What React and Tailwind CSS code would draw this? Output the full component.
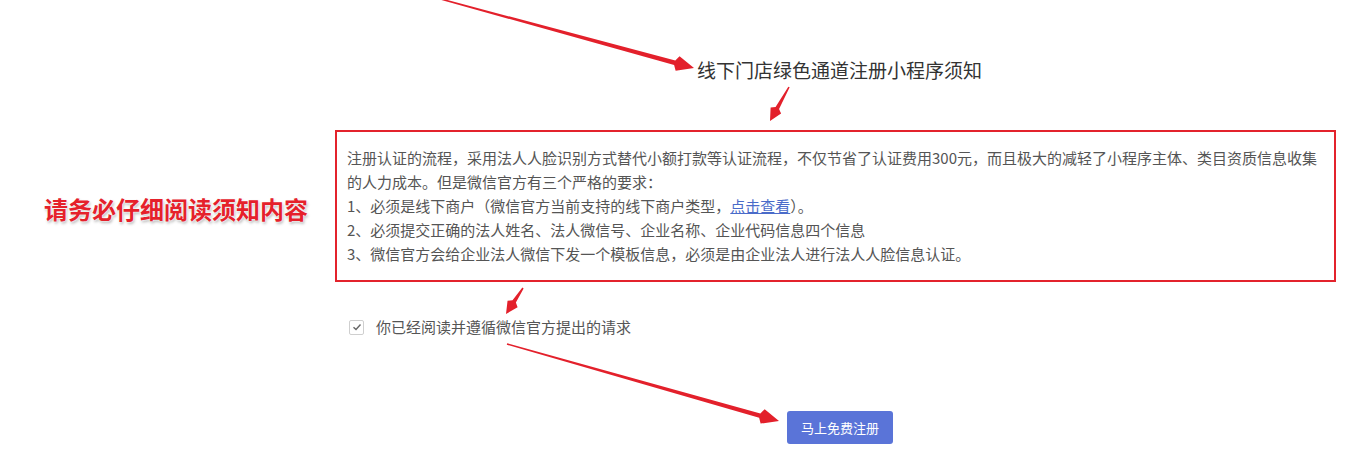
const arrows = [
  { from: [437, -2], to: [694, 68], w0: 1.5, w1: 4.5, L: 20, W: 15 },
  { from: [789, 87], to: [770, 121], w0: 1.5, w1: 4, L: 15, W: 12 },
  { from: [523, 288], to: [506, 314], w0: 1.5, w1: 4, L: 15, W: 12 },
  { from: [507, 344], to: [779, 421], w0: 1.5, w1: 4.5, L: 20, W: 15 },
];

const arrowPoints = ({ from, to, w0, w1, L, W }) => {
  const dx = to[0] - from[0];
  const dy = to[1] - from[1];
  const len = Math.hypot(dx, dy);
  const ux = dx / len;
  const uy = dy / len;
  const nx = -uy;
  const ny = ux;
  const bx = to[0] - ux * L;
  const by = to[1] - uy * L;
  const pts = [
    [from[0] + (nx * w0) / 2, from[1] + (ny * w0) / 2],
    [bx + (nx * w1) / 2, by + (ny * w1) / 2],
    [bx + (nx * W) / 2 + ux * 3, by + (ny * W) / 2 + uy * 3],
    to,
    [bx - (nx * W) / 2 + ux * 3, by - (ny * W) / 2 + uy * 3],
    [bx - (nx * w1) / 2, by - (ny * w1) / 2],
    [from[0] - (nx * w0) / 2, from[1] - (ny * w0) / 2],
  ];
  return pts.map((p) => p.join(",")).join(" ");
};

export default function App() {
  return (
    <div className="relative w-full h-[472px] bg-white overflow-hidden font-['Noto_Sans_CJK_SC','Microsoft_YaHei',sans-serif]">
      {/* Title */}
      <div className="pt-[58px] pl-[697px] text-[19px] leading-[24px] text-[#333]">
        线下门店绿色通道注册小程序须知
      </div>

      {/* Notice row */}
      <div className="flex items-start mt-[48px]">
        <div className="w-[335px] shrink-0 pl-[44px] pt-[63px]">
          <span className="text-[24px] leading-[32px] font-bold text-[#e5212b] [text-shadow:0_0_2px_#fff,0_0_2px_#fff,1px_2px_3px_rgba(0,0,0,0.3)]">
            请务必仔细阅读须知内容
          </span>
        </div>
        <div className="w-[1001px] shrink-0">
          <div className="h-[152px] border-2 border-[#e3232c] px-[10px] pt-[14px] text-[15px] leading-[24px] text-[#555]">
            <p>
              注册认证的流程，采用法人人脸识别方式替代小额打款等认证流程，不仅节省了认证费用300元，而且极大的减轻了小程序主体、类目资质信息收集的人力成本。但是微信官方有三个严格的要求：
            </p>
            <p>
              1、必须是线下商户（微信官方当前支持的线下商户类型，
              <a href="#" className="text-[#4a6bc9] underline">点击查看</a>
              ）。
            </p>
            <p>2、必须提交正确的法人姓名、法人微信号、企业名称、企业代码信息四个信息</p>
            <p>3、微信官方会给企业法人微信下发一个模板信息，必须是由企业法人进行法人人脸信息认证。</p>
          </div>

          {/* Agreement checkbox */}
          <label className="flex items-center h-[20px] mt-[35px] pl-[14px] gap-[12px] text-[15px] text-[#555]">
            <span className="flex items-center justify-center w-[15px] h-[15px] border border-[#cfcfcf] rounded-[2px] bg-white">
              <svg width="10" height="10" viewBox="0 0 10 10">
                <path d="M1.5 5.2 L4 7.5 L8.5 2.5" fill="none" stroke="#666" strokeWidth="1.4" />
              </svg>
            </span>
            你已经阅读并遵循微信官方提出的请求
          </label>

          {/* Register button */}
          <button className="mt-[74px] ml-[452px] w-[106px] h-[33px] rounded-[3px] bg-[#5a74d8] text-white text-[13px]">
            马上免费注册
          </button>
        </div>
      </div>

      {/* Annotation arrows */}
      <svg className="absolute inset-0 pointer-events-none" width="1358" height="472">
        {arrows.map((a, i) => (
          <polygon key={i} points={arrowPoints(a)} fill="#e3202b" />
        ))}
      </svg>
    </div>
  );
}
